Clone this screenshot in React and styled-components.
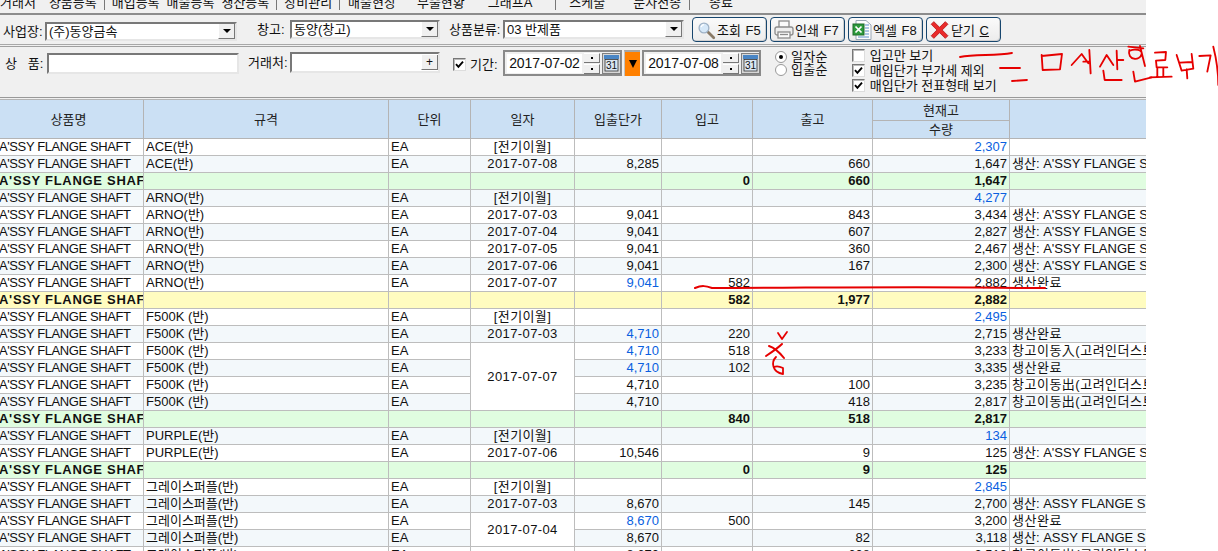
import React from "react";
import styled, { createGlobalStyle } from "styled-components";

const GlobalStyle = createGlobalStyle`
  html, body { margin: 0; padding: 0; background: #fff; }
  body { font-family: "Liberation Sans", "Noto Sans CJK KR", sans-serif; font-size: 13px; color: #111; }
`;

const Page = styled.div`
  position: relative;
  width: 1218px;
  height: 551px;
  overflow: hidden;
  background: #fff;
`;
const Screen = styled.div`
  width: 1146px;
  height: 551px;
  overflow: hidden;
  display: flex;
  flex-direction: column;
  background: #f0f0f0;
`;
const MenuBar = styled.nav`
  flex: none;
  height: 13px;
  box-sizing: content-box;
  display: flex;
  align-items: flex-start;
  overflow: hidden;
  border-bottom: 2px solid #8c8c8c;
`;
const MenuItem = styled.span`
  margin-top: -4px;
  margin-left: ${(p) => p.$gap}px;
  line-height: 13px;
  white-space: nowrap;
`;
const MenuSep = styled.span`
  flex: none;
  width: 1px;
  height: 10px;
  margin-left: ${(p) => p.$gap}px;
  background: #777;
`;
const TopRow = styled.div`
  flex: none;
  height: 27px;
  padding: 2px 0 0 3px;
  display: flex;
  align-items: flex-start;
`;
const Groove = styled.div`
  flex: none;
  height: 1px;
  border-top: 1px solid #a8a8a8;
  border-bottom: 1px solid #a0a0a0;
`;
const FilterRow = styled.div`
  flex: none;
  height: 47px;
  padding: 3px 0 0 5px;
  display: flex;
  align-items: flex-start;
  border-bottom: 1px solid #999;
  margin-bottom: 1px;
`;
const Field = styled.div`
  display: flex;
  align-items: center;
  margin-top: ${(p) => p.$top || 0}px;
  margin-left: ${(p) => p.$gap || 0}px;
`;
const Label = styled.label`
  width: ${(p) => p.$w}px;
  flex: none;
  white-space: pre;
  line-height: 19px;
  margin-left: ${(p) => p.$gap || 0}px;
`;
const Sunken = styled.div`
  flex: none;
  box-sizing: border-box;
  width: ${(p) => p.$w}px;
  height: ${(p) => p.$h || 19}px;
  display: flex;
  align-items: center;
  justify-content: space-between;
  background: #fff;
  border: 2px solid;
  border-color: #787878 #e6e6e6 #e6e6e6 #787878;
  padding-left: 2px;
  line-height: 15px;
  white-space: nowrap;
`;
const ArrowBox = styled.span`
  flex: none;
  width: 17px;
  height: 15px;
  display: flex;
  align-items: center;
  justify-content: center;
  background: #f0f0f0;
  border-left: 1px solid #fff;
  border-right: 1px solid #777;
  border-bottom: 1px solid #777;
  box-sizing: border-box;
`;
const Tri = styled.i`
  display: block;
  width: 0;
  height: 0;
  border-left: ${(p) => p.$s || 4}px solid transparent;
  border-right: ${(p) => p.$s || 4}px solid transparent;
  border-top: ${(p) => p.$t || p.$s || 4}px solid #000;
`;
const PlusBox = styled(ArrowBox)`
  font-size: 12px;
  line-height: 14px;
`;
const Buttons = styled.div`
  display: flex;
  gap: 3px;
  margin-left: 8px;
`;
const ToolButton = styled.button`
  box-sizing: border-box;
  width: 75px;
  height: 25px;
  padding: 0 0 0 2px;
  display: flex;
  align-items: center;
  gap: 0;
  border: 1px solid #17466e;
  border-radius: 4px;
  background: linear-gradient(#fafafa, #ececec);
  box-shadow: inset -1px -1px 0 #d0d0d0;
  font: inherit;
  color: #111;
  white-space: pre;
  word-spacing: 1px;
`;
const Check = styled.span`
  flex: none;
  box-sizing: border-box;
  width: 13px;
  height: 13px;
  display: flex;
  align-items: center;
  justify-content: center;
  background: #fff;
  border: 1px solid;
  border-color: #777 #ddd #ddd #777;
  box-shadow: inset 1px 1px 0 #bbb;
`;
const Picker = styled.div`
  flex: none;
  box-sizing: border-box;
  width: 119px;
  height: 26px;
  padding: 2px 2px;
  display: flex;
  align-items: center;
  gap: 2px;
  border: 2px solid #8a8a8a;
  margin-left: ${(p) => p.$gap || 0}px;
`;
const DateInput = styled.div`
  width: 75px;
  height: 19px;
  flex: none;
  background: #fff;
  font-size: 14px;
  line-height: 19px;
  text-align: center;
  overflow: hidden;
  white-space: nowrap;
  letter-spacing: -0.1px;
`;
const Spin = styled.div`
  flex: none;
  width: 16px;
  display: flex;
  flex-direction: column;
  gap: 1px;
`;
const SpinBtn = styled.span`
  height: 10px;
  display: flex;
  align-items: center;
  justify-content: center;
  background: #f0f0f0;
  border-right: 1px solid #777;
  border-bottom: 1px solid #777;
  border-top: 1px solid #fff;
  box-sizing: border-box;
`;
const SpinMark = styled.i`
  display: block;
  width: 2px;
  height: 2px;
  background: #000;
`;
const OrangeBtn = styled.div`
  flex: none;
  width: 16px;
  height: 26px;
  margin-left: 2px;
  display: flex;
  align-items: center;
  justify-content: center;
  background: #ff8000;
  border-top: 2px solid #a5a5a5;
  border-left: 1px solid #c0c0c0;
  box-sizing: border-box;
`;
const RadioCol = styled.div`
  margin-left: 14px;
  display: flex;
  flex-direction: column;
`;
const RadioRow = styled.div`
  display: flex;
  align-items: center;
  gap: 4px;
  height: 13px;
  line-height: 13px;
  letter-spacing: 0.3px;
`;
const Radio = styled.span`
  box-sizing: border-box;
  width: 12px;
  height: 12px;
  border-radius: 50%;
  border: 1px solid #999;
  background: #fff;
  display: flex;
  align-items: center;
  justify-content: center;
`;
const RadioDot = styled.i`
  display: block;
  width: 4px;
  height: 4px;
  border-radius: 50%;
  background: #000;
`;
const CheckCol = styled.div`
  margin-left: 24px;
  margin-top: -2px;
  display: flex;
  flex-direction: column;
`;
const CheckRow = styled.div`
  display: flex;
  align-items: center;
  gap: 5px;
  height: 15px;
  line-height: 15px;
  white-space: nowrap;
`;
const GridClip = styled.div`
  flex: 1;
  min-height: 0;
  overflow: hidden;
`;
const Grid = styled.table`
  border-collapse: collapse;
  table-layout: fixed;
  width: 1153px;
  margin-left: -7px;
  background: #fff;
`;
const Head = styled.th`
  height: ${(p) => p.$h || 36}px;
  padding: 0;
  background: #cbe0f4;
  border: 1px solid #b4b4b4;
  font-weight: 400;
  text-align: center;
  line-height: 15px;
  color: #222;
`;
const Row = styled.tr`
  height: 17px;
  background: ${(p) =>
    p.$kind === "green" ? "#e0fde0" : p.$kind === "yellow" ? "#fffcc0" : p.$tint ? "#f3f8fb" : "#fff"};
  font-weight: ${(p) => (p.$kind ? 700 : 400)};
`;
const Cell = styled.td`
  padding: 0 2px;
  height: 16px;
  border: 1px solid #bdbdbd;
  overflow: hidden;
  white-space: nowrap;
  line-height: 16px;
  text-align: left;
  color: #111;
`;
const NameCell = styled(Cell)`
  padding-left: 5px;
  letter-spacing: ${(p) => (p.$bold ? "0.7px" : "-0.4px")};
`;
const NumCell = styled(Cell)`
  text-align: right;
  color: ${(p) => (p.$blue ? "#0a5fe0" : "#111")};
`;
const DateCell = styled(Cell)`
  text-align: center;
  letter-spacing: 0.4px;
  background: ${(p) => (p.$merged ? "#fff" : "transparent")};
`;
const MemoCell = styled(Cell)`
  letter-spacing: ${(p) => (p.$wide ? "0.5px" : "0")};
`;
const Ink = styled.svg`
  position: absolute;
  left: 0;
  top: 0;
  pointer-events: none;
`;

const menu = [
  ["거래처", 0], ["상품등록", 13], ["|", 7], ["매입등록", 7], ["매출등록", 7], ["생산등록", 7], ["|", 7],
  ["장비관리", 7], ["|", 7], ["매출현장", 8], ["부출현황", 21], ["그래프A", 23], ["|", 23], ["스케줄", 13],
  ["문자전송", 28], ["|", 8], ["종료", 19],
];

const SA = "A'SSY FLANGE SHAFT";
const SM = "생산: A'SSY FLANGE SHAFT";
const SB = "생산: ASSY FLANGE SHAFT";
const DONE = "생산완료";
const IN = "창고이동入(고려인더스트리)";
const OUT = "창고이동出(고려인더스트리)";
const OPEN = "[전기이월]";

const d = (spec, date, price, inn, out, stock, memo, o = {}) => ({ spec, date, price, inn, out, stock, memo, ...o });
const sum = (kind, inn, out, stock) => ({ kind, inn, out, stock });

const rows = [
  d("ACE(반)", OPEN, "", "", "", "2,307", "", { sb: 1 }),
  d("ACE(반)", "2017-07-08", "8,285", "", "660", "1,647", SM),
  sum("green", "0", "660", "1,647"),
  d("ARNO(반)", OPEN, "", "", "", "4,277", "", { sb: 1 }),
  d("ARNO(반)", "2017-07-03", "9,041", "", "843", "3,434", SM),
  d("ARNO(반)", "2017-07-04", "9,041", "", "607", "2,827", SM),
  d("ARNO(반)", "2017-07-05", "9,041", "", "360", "2,467", SM),
  d("ARNO(반)", "2017-07-06", "9,041", "", "167", "2,300", SM),
  d("ARNO(반)", "2017-07-07", "9,041", "582", "", "2,882", DONE, { pb: 1 }),
  sum("yellow", "582", "1,977", "2,882"),
  d("F500K (반)", OPEN, "", "", "", "2,495", "", { sb: 1 }),
  d("F500K (반)", "2017-07-03", "4,710", "220", "", "2,715", DONE, { pb: 1 }),
  d("F500K (반)", "2017-07-07", "4,710", "518", "", "3,233", IN, { pb: 1, span: 4 }),
  d("F500K (반)", null, "4,710", "102", "", "3,335", DONE, { pb: 1 }),
  d("F500K (반)", null, "4,710", "", "100", "3,235", OUT),
  d("F500K (반)", null, "4,710", "", "418", "2,817", OUT),
  sum("green", "840", "518", "2,817"),
  d("PURPLE(반)", OPEN, "", "", "", "134", "", { sb: 1 }),
  d("PURPLE(반)", "2017-07-06", "10,546", "", "9", "125", SM),
  sum("green", "0", "9", "125"),
  d("그레이스퍼플(반)", OPEN, "", "", "", "2,845", "", { sb: 1 }),
  d("그레이스퍼플(반)", "2017-07-03", "8,670", "", "145", "2,700", SB),
  d("그레이스퍼플(반)", "2017-07-04", "8,670", "500", "", "3,200", DONE, { pb: 1, span: 2 }),
  d("그레이스퍼플(반)", null, "8,670", "", "82", "3,118", SB),
  d("그레이스퍼플(반)", "", "8,670", "", "608", "2,510", OUT),
];

const CheckMark = () => (
  <svg width="9" height="9" viewBox="0 0 9 9"><path d="M1 4.2 L3.4 6.8 L8 1.6" fill="none" stroke="#000" strokeWidth="1.9" /></svg>
);
const Lens = () => (
  <svg width="22" height="22" viewBox="-3 -3 27 27" style={{ flex: "none" }}>
    <path d="M12 12 L20 20" stroke="#8a7a66" strokeWidth="3.4" strokeLinecap="round" />
    <circle cx="8" cy="8" r="6" fill="#d6e8f8" stroke="#9fb2c6" strokeWidth="1.6" />
    <path d="M4.5 7 A4 4 0 0 1 8 4" fill="none" stroke="#fff" strokeWidth="1.6" />
  </svg>
);
const Printer = () => (
  <svg width="22" height="22" viewBox="0 0 22 22" fill="#eee" stroke="#8c8c8c" strokeWidth="1.3" style={{ flex: "none" }}>
    <rect x="6" y="2" width="10" height="7" fill="#fafafa" />
    <rect x="2" y="8" width="18" height="8" rx="2" />
    <rect x="5" y="13" width="12" height="6" fill="#fafafa" />
    <path d="M7 15.5 H15" />
  </svg>
);
const Excel = () => (
  <svg width="22" height="22" viewBox="0 0 22 22" style={{ flex: "none" }}>
    <path d="M5 1.5 H15 L20 6 V20.5 H5 Z" fill="#fdfdfd" stroke="#9aa7b5" />
    <path d="M14 6 H18 M14 9 H18 M14 12 H18 M14 15 H18 M7 18 H18" stroke="#5d8fc9" />
    <rect x="2" y="5" width="11" height="11" fill="#2d9a3c" stroke="#1d6a2a" />
    <path d="M4.5 7.5 L10.5 13.5 M10.5 7.5 L4.5 13.5" stroke="#fff" strokeWidth="1.7" />
  </svg>
);
const CloseX = () => (
  <svg width="22" height="22" viewBox="-1 -1 25 24" style={{ flex: "none" }}>
    <path d="M4.5 1.5 L11 8 L17.5 1.5 L20.5 4.5 L14 11 L20.5 17.5 L17.5 20.5 L11 14 L4.5 20.5 L1.5 17.5 L8 11 L1.5 4.5 Z" fill="#ea2b2b" stroke="#b82020" />
  </svg>
);
const Calendar = () => (
  <svg width="19" height="21" viewBox="0 0 19 21" style={{ flex: "none" }}>
    <rect x="0.5" y="0.5" width="18" height="20" fill="#d7d7d7" stroke="#808080" />
    <rect x="2" y="2" width="15" height="4" fill="#4a86c5" />
    <rect x="3" y="6.5" width="13" height="11.5" fill="#dbe6f2" stroke="#333" strokeWidth="0.8" />
    <text x="9.5" y="16" textAnchor="middle" fontSize="10" fontFamily="Liberation Sans, sans-serif" fill="#111">31</text>
  </svg>
);
const DatePicker = ({ value, gap }) => (
  <Picker $gap={gap}>
    <DateInput>{value}</DateInput>
    <Spin>
      <SpinBtn><SpinMark /></SpinBtn>
      <SpinBtn><SpinMark /></SpinBtn>
    </Spin>
    <Calendar />
  </Picker>
);

const columns = [150, 245, 82, 104, 87, 91, 120, 137, 137];

export default function App() {
  return (
    <Page>
      <GlobalStyle />
      <Screen>
        <MenuBar>
          {menu.map(([t, g], i) => (t === "|" ? <MenuSep key={i} $gap={g} /> : <MenuItem key={i} $gap={g}>{t}</MenuItem>))}
        </MenuBar>
        <TopRow>
          <Field $top={5}>
            <Label $w={42}>사업장:</Label>
            <Sunken $w={192}>(주)동양금속<ArrowBox><Tri /></ArrowBox></Sunken>
          </Field>
          <Field $top={3} $gap={20}>
            <Label $w={33}>창고:</Label>
            <Sunken $w={150}>동양(창고)<ArrowBox><Tri /></ArrowBox></Sunken>
          </Field>
          <Field $top={3} $gap={9}>
            <Label $w={54}>상품분류:</Label>
            <Sunken $w={181}>03 반제품<ArrowBox><Tri /></ArrowBox></Sunken>
          </Field>
          <Buttons>
            <ToolButton><Lens />조회 F5</ToolButton>
            <ToolButton><Printer />인쇄 F7</ToolButton>
            <ToolButton><Excel />엑셀 F8</ToolButton>
            <ToolButton><CloseX /><span>닫기 <u>C</u></span></ToolButton>
          </Buttons>
        </TopRow>
        <Groove />
        <FilterRow>
          <Field $top={3}>
            <Label $w={42}>{"상   품:"}</Label>
            <Sunken $w={192} $h={21} />
          </Field>
          <Field $top={2} $gap={9}>
            <Label $w={42}>거래처:</Label>
            <Sunken $w={150} $h={21}><span />
              <PlusBox>+</PlusBox>
            </Sunken>
          </Field>
          <Field $top={5} $gap={13}>
            <Check><CheckMark /></Check>
            <Label $w={37} $gap={4}>기간:</Label>
          </Field>
          <DatePicker value="2017-07-02" gap={-4} />
          <OrangeBtn><Tri $s={4} $t={8} /></OrangeBtn>
          <DatePicker value="2017-07-08" gap={2} />
          <RadioCol>
            <RadioRow><Radio><RadioDot /></Radio>일자순</RadioRow>
            <RadioRow><Radio />입출순</RadioRow>
          </RadioCol>
          <CheckCol>
            <CheckRow><Check />입고만 보기</CheckRow>
            <CheckRow><Check><CheckMark /></Check>매입단가 부가세 제외</CheckRow>
            <CheckRow><Check><CheckMark /></Check>매입단가 전표형태 보기</CheckRow>
          </CheckCol>
        </FilterRow>
        <GridClip>
          <Grid>
            <colgroup>{columns.map((w, i) => <col key={i} style={{ width: w }} />)}</colgroup>
            <thead>
              <tr>
                {["상품명", "규격", "단위", "일자", "입출단가", "입고", "출고"].map((h) => (
                  <Head key={h} rowSpan={2}>{h}</Head>
                ))}
                <Head $h={20}>현재고</Head>
                <Head rowSpan={2} />
              </tr>
              <tr><Head $h={17}>수량</Head></tr>
            </thead>
            <tbody>
              {rows.map((r, i) =>
                r.kind ? (
                  <Row key={i} $kind={r.kind}>
                    <NameCell $bold>{SA}</NameCell>
                    <Cell /><Cell /><Cell /><Cell />
                    <NumCell>{r.inn}</NumCell>
                    <NumCell>{r.out}</NumCell>
                    <NumCell>{r.stock}</NumCell>
                    <Cell />
                  </Row>
                ) : (
                  <Row key={i} $tint={i % 2 === 1}>
                    <NameCell>{SA}</NameCell>
                    <Cell>{r.spec}</Cell>
                    <Cell>EA</Cell>
                    {r.date !== null && (
                      <DateCell $merged={!!r.span} rowSpan={r.span || 1}>{r.date}</DateCell>
                    )}
                    <NumCell $blue={r.pb}>{r.price}</NumCell>
                    <NumCell>{r.inn}</NumCell>
                    <NumCell>{r.out}</NumCell>
                    <NumCell $blue={r.sb}>{r.stock}</NumCell>
                    <MemoCell $wide={r.memo === DONE || r.memo === IN || r.memo === OUT}>{r.memo}</MemoCell>
                  </Row>
                )
              )}
            </tbody>
          </Grid>
        </GridClip>
      </Screen>
      <Ink width="1218" height="551" viewBox="0 0 1218 551" fill="none" stroke="#e60000" strokeWidth="1.8" strokeLinecap="round" strokeLinejoin="round">
        <path d="M960 57 C975 54 995 56 1012 53" />
        <path d="M1000 68 L1020 68" />
        <path d="M1012 81 L1027 80" />
        <g transform="translate(960 30) scale(0.3333)" strokeWidth="5.5">
          <path d="M245 75 L248 120 L300 118 L306 72 L245 78" />
          <path d="M335 105 L365 72 L385 100 M388 60 L392 130 M370 95 L388 95" />
          <path d="M420 110 L440 75 L460 105 M470 62 L472 118 M472 90 L490 90 M430 122 L434 150 L485 150" />
          <path d="M508 60 C500 90 540 95 545 72 C548 60 525 55 510 62 M505 50 L550 55 M540 48 L555 108 M520 125 L525 155 L575 142" />
          <path d="M585 68 L618 66 L616 90 L588 92 L590 112 L622 112 M592 115 L592 140 M610 115 L610 140 M570 142 L635 140" />
          <path d="M650 75 L665 122 L700 116 L695 72 M660 98 L696 96 M680 118 L682 145" />
          <path d="M718 78 L752 76 L742 125 M760 50 C770 90 775 130 775 165" />
        </g>
        <path d="M695 288 C702 285 706 286 712 288 C800 288 930 286 1020 288 L1045 288" strokeWidth="2" />
        <path d="M778 333 L782 339 L787 332" />
        <path d="M769 346 C775 348 780 353 784 358 M766 356 C772 352 778 348 782 344" strokeWidth="2" />
        <path d="M776 357 C771 362 772 372 783 374 L783 368 C779 366 776 366 774 367" />
      </Ink>
    </Page>
  );
}
